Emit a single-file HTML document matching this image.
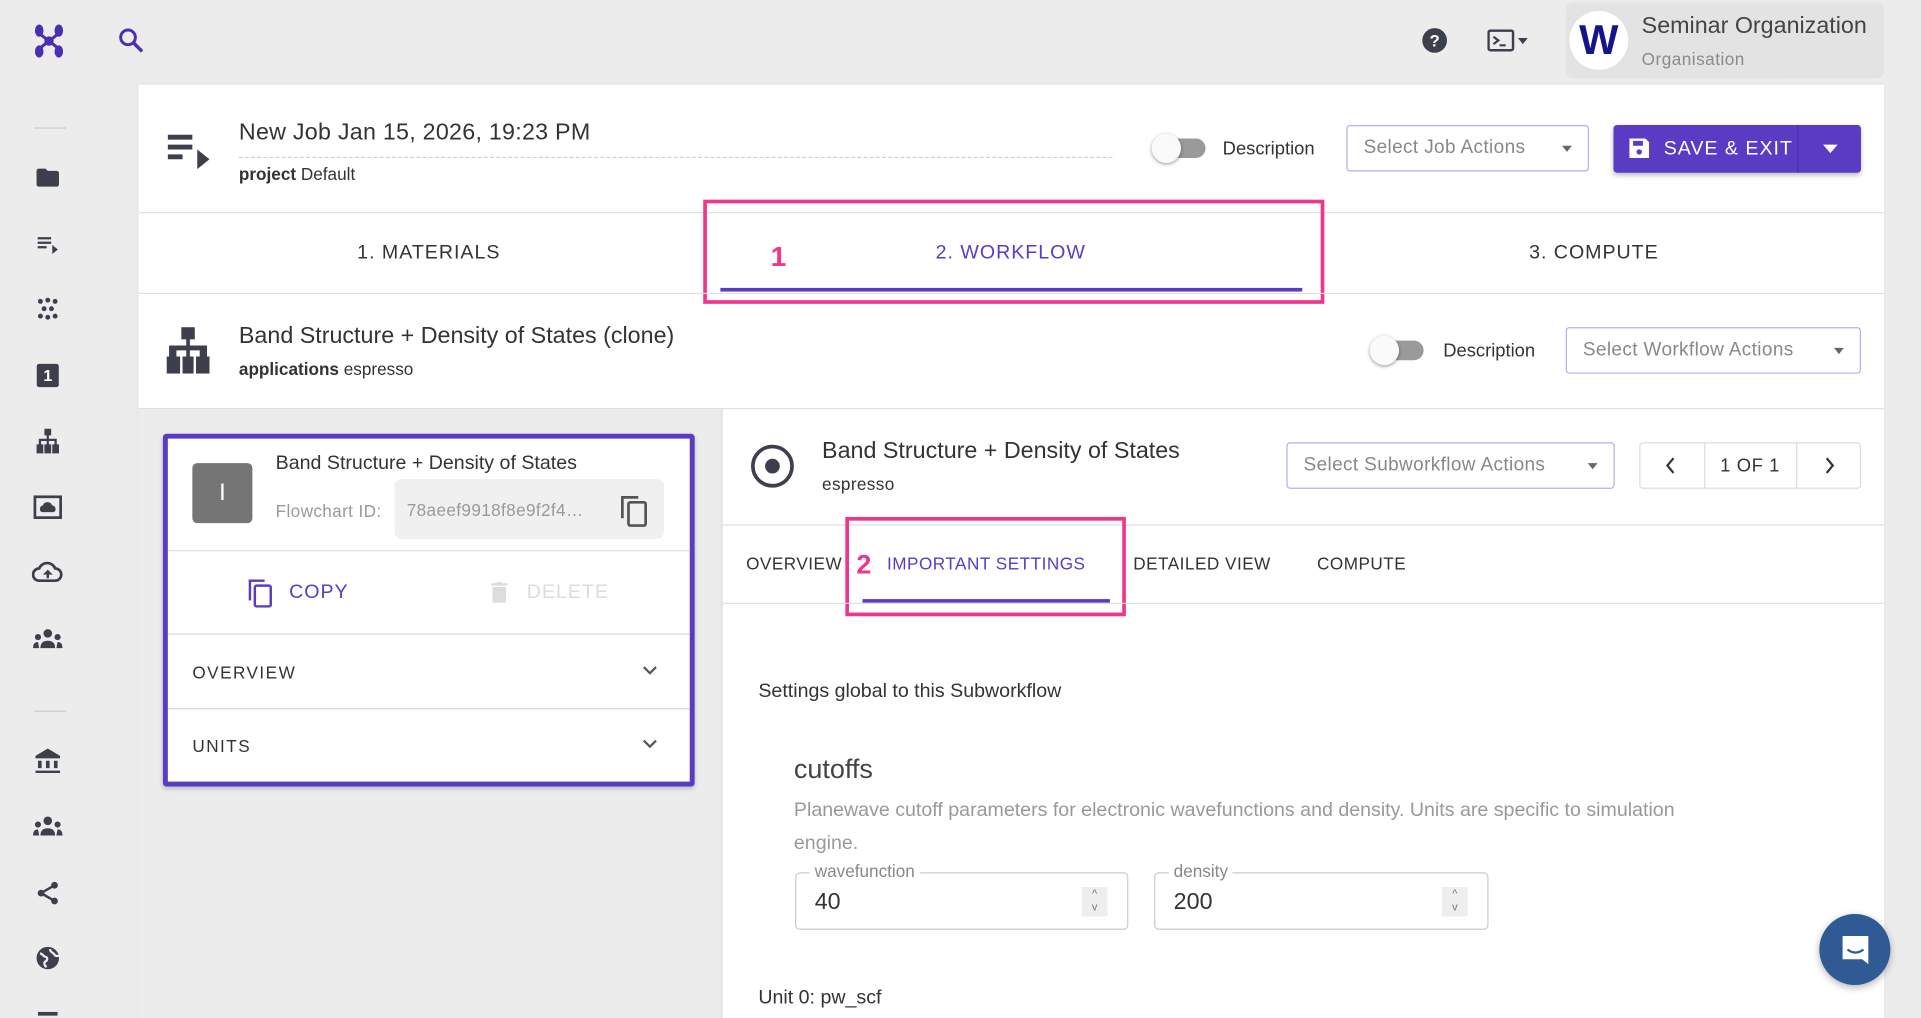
<!DOCTYPE html>
<html><head><meta charset="utf-8"><style>
*{box-sizing:border-box;margin:0;padding:0}
html,body{width:1921px;height:1018px;overflow:hidden;background:#ececec}
#s{position:absolute;left:0;top:0;width:1568px;height:831px;overflow:hidden;transform:scale(1.22513);transform-origin:0 0;font-family:"Liberation Sans",sans-serif;color:#333}
.a{position:absolute}
.t{position:absolute;white-space:nowrap;line-height:1}
.ln{position:absolute;background:#e0e0e0;height:1px}
.sel{position:absolute;border:1px solid #b9aee6;border-radius:3px;background:#fff;color:#888;font-size:15.5px;letter-spacing:.3px}
.sel span{position:absolute;top:50%;transform:translateY(-50%);left:13px}
.sel i{position:absolute;right:13px;top:50%;margin-top:-2px;border-left:4px solid transparent;border-right:4px solid transparent;border-top:5px solid #666}
.tog{position:absolute;width:44px;height:24px}
.tog b{position:absolute;left:10px;top:4px;width:34px;height:16px;border-radius:8px;background:#9a9a9a}
.tog u{position:absolute;left:0;top:0;width:24px;height:24px;border-radius:50%;background:#fafafa;box-shadow:0 1px 3px rgba(0,0,0,.4)}
.ic{position:absolute;fill:#3d3f4d}
</style></head><body><div id="s">
<!-- sidebar -->
<svg class="a" style="left:27px;top:19px" width="26" height="29" viewBox="0 0 26 29"><g fill="#4b2fb3"><ellipse cx="5" cy="6" rx="3.5" ry="5"/><ellipse cx="21" cy="6" rx="3.5" ry="5"/><ellipse cx="5" cy="23" rx="3.5" ry="5"/><ellipse cx="21" cy="23" rx="3.5" ry="5"/><circle cx="13" cy="14.5" r="3.8"/><path d="M6 9l5 4M20 9l-5 4M6 20l5-4M20 20l-5-4" stroke="#4b2fb3" stroke-width="2.5"/></g></svg>
<svg class="a" style="left:95px;top:21px" width="24" height="24" viewBox="0 0 24 24"><circle cx="9.5" cy="9.5" r="6" fill="none" stroke="#4b2fb3" stroke-width="2.4"/><path d="M14 14l7 7" stroke="#4b2fb3" stroke-width="2.8"/></svg>
<div class="a" style="left:28px;top:104px;width:26px;height:1px;background:#ccc"></div>
<svg class="ic" style="left:28px;top:134px" width="22" height="22" viewBox="0 0 24 24"><path d="M10 4H4c-1.1 0-2 .9-2 2v12c0 1.1.9 2 2 2h16c1.1 0 2-.9 2-2V8c0-1.1-.9-2-2-2h-8l-2-2z"/></svg>
<svg class="ic" style="left:28px;top:189px" width="22" height="22" viewBox="0 0 24 24"><path d="M3 5h12v2H3zM3 9h12v2H3zM3 13h8v2H3zM16 12l5 4-5 4z"/></svg>
<svg class="ic" style="left:29px;top:242px" width="20" height="20" viewBox="0 0 20 20"><g><circle cx="4" cy="4" r="2"/><circle cx="10" cy="3" r="2"/><circle cx="16" cy="4" r="2"/><circle cx="7" cy="10" r="2"/><circle cx="13" cy="10" r="2"/><circle cx="4" cy="16" r="2"/><circle cx="10" cy="17" r="2"/><circle cx="16" cy="16" r="2"/></g></svg>
<div class="a" style="left:30px;top:297px;width:18px;height:19px;background:#3d3f4d;border-radius:2px;color:#fff;font-size:13px;font-weight:bold;text-align:center;line-height:19px">1</div>
<svg class="ic" style="left:28px;top:349px" width="22" height="22" viewBox="0 0 24 24"><path d="M9 1h6v6h-2v3h7v5h2v8h-6v-8h2v-3h-5v3h2v8H9v-8h2v-3H6v3h2v8H2v-8h2v-5h7V7H9z"/></svg>
<svg class="a" style="left:27px;top:404px" width="24" height="20" viewBox="0 0 24 20"><rect x="1.5" y="1.5" width="21" height="17" fill="none" stroke="#3d3f4d" stroke-width="2.2"/><path d="M7 14a3 3 0 0 1 1-5.5 4 4 0 0 1 7.5 0A3 3 0 0 1 17 14z" fill="#3d3f4d"/></svg>
<svg class="a" style="left:26px;top:457px" width="26" height="20" viewBox="0 0 26 20"><path d="M6 17a5 5 0 0 1 0-10 7 7 0 0 1 13 0 5 5 0 0 1 0 10z" fill="none" stroke="#3d3f4d" stroke-width="2.2"/><path d="M13 8l-4 4h3v3h2v-3h3z" fill="#3d3f4d"/></svg>
<svg class="ic" style="left:26px;top:512px" width="26" height="18" viewBox="0 0 26 18"><circle cx="13" cy="5" r="3.5"/><circle cx="5" cy="8" r="2.5"/><circle cx="21" cy="8" r="2.5"/><path d="M7 17c0-4 2-6 6-6s6 2 6 6zM1 17c0-3 1-5 4-5l1 5zM25 17c0-3-1-5-4-5l-1 5z"/></svg>
<div class="a" style="left:28px;top:580px;width:26px;height:1px;background:#ccc"></div>
<svg class="ic" style="left:27px;top:609px" width="24" height="24" viewBox="0 0 24 24"><path d="M12 2L2 8v2h20V8zM4 12h3v6H4zM10.5 12h3v6h-3zM17 12h3v6h-3zM2 20h20v2H2z"/></svg>
<svg class="ic" style="left:26px;top:665px" width="26" height="18" viewBox="0 0 26 18"><circle cx="13" cy="5" r="3.5"/><circle cx="5" cy="8" r="2.5"/><circle cx="21" cy="8" r="2.5"/><path d="M7 17c0-4 2-6 6-6s6 2 6 6zM1 17c0-3 1-5 4-5l1 5zM25 17c0-3-1-5-4-5l-1 5z"/></svg>
<svg class="a" style="left:28px;top:718px" width="22" height="22" viewBox="0 0 24 24"><path d="M18 5L6 12l12 7" fill="none" stroke="#3d3f4d" stroke-width="2.2"/><circle cx="18" cy="5" r="3" fill="#3d3f4d"/><circle cx="6" cy="12" r="3" fill="#3d3f4d"/><circle cx="18" cy="19" r="3" fill="#3d3f4d"/></svg>
<svg class="a" style="left:28px;top:771px" width="22" height="22" viewBox="0 0 24 24"><circle cx="12" cy="12" r="10" fill="#3d3f4d"/><path d="M5 8c3 0 3 3 5 3s2 3 0 4-1 4 1 5M14 4c0 3 3 3 4 5s3 1 4 1" fill="none" stroke="#ececec" stroke-width="2"/></svg>
<div class="a" style="left:31px;top:826px;width:16px;height:3px;background:#3d3f4d"></div>
<!-- top right -->
<svg class="a" style="left:1160px;top:22px" width="22" height="22" viewBox="0 0 24 24"><circle cx="12" cy="12" r="11" fill="#3d3f4d"/><text x="12" y="17.5" font-size="15" font-weight="bold" fill="#fff" text-anchor="middle" font-family="Liberation Sans">?</text></svg>
<svg class="a" style="left:1214px;top:24px" width="38" height="18" viewBox="0 0 38 18"><rect x="1" y="1" width="20" height="16" rx="1.5" fill="none" stroke="#3d3f4d" stroke-width="2"/><path d="M5 6l4 3-4 3M10 13h5" fill="none" stroke="#3d3f4d" stroke-width="1.8"/><path d="M25 7h8l-4 5z" fill="#3d3f4d"/></svg>
<div class="a" style="left:1278px;top:2px;width:260px;height:62px;background:#e3e3e3;border-radius:6px"></div>
<div class="a" style="left:1281px;top:9px;width:48px;height:48px;border-radius:50%;background:#fff;color:#15158a;font-weight:bold;font-size:34px;text-align:center;line-height:48px;font-family:'Liberation Sans',sans-serif">W</div>
<div class="t" style="left:1340px;top:12px;font-size:19px;color:#444">Seminar Organization</div>
<div class="t" style="left:1340px;top:41px;font-size:14px;color:#8a8a8a;letter-spacing:.4px">Organisation</div>
<!-- card -->
<div class="a" style="left:113px;top:69px;width:1425px;height:762px;background:#fff;box-shadow:0 0 2px rgba(0,0,0,.15)"></div>
<svg class="ic" style="left:136px;top:108px" width="38" height="30" viewBox="0 0 38 30"><path d="M1 2h20v4H1zM1 10h20v4H1zM1 18h12v4H1zM25 14l10 8-10 8z"/></svg>
<div class="t" style="left:195px;top:99px;font-size:19px;color:#333;letter-spacing:.2px">New Job Jan 15, 2026, 19:23 PM</div>
<div class="a" style="left:195px;top:128px;width:713px;border-top:1px dashed #ccc"></div>
<div class="t" style="left:195px;top:135px;font-size:14px;color:#333"><b>project</b> Default</div>
<div class="tog" style="left:940px;top:109px"><b></b><u></u></div>
<div class="t" style="left:998px;top:114px;font-size:15px;color:#333">Description</div>
<div class="sel" style="left:1099px;top:102px;width:198px;height:38px"><span>Select Job Actions</span><i></i></div>
<div class="a" style="left:1317px;top:102px;width:202px;height:39px;background:#5a3bc4;border-radius:3px;box-shadow:0 2px 4px rgba(0,0,0,.25)"></div>
<div class="a" style="left:1467px;top:102px;width:1px;height:39px;background:#4a2fa8"></div>
<svg class="a" style="left:1329px;top:112px" width="18" height="18" viewBox="0 0 18 18"><path d="M1 1h13l3 3v13H1z" fill="#fff"/><rect x="4" y="3" width="8" height="4" fill="#5a3bc4"/><circle cx="9" cy="12" r="2.2" fill="#5a3bc4"/></svg>
<div class="t" style="left:1358px;top:114px;font-size:16px;color:#fff;letter-spacing:.8px;font-weight:500">SAVE &amp; EXIT</div>
<div class="a" style="left:1488px;top:118px;border-left:6px solid transparent;border-right:6px solid transparent;border-top:7px solid #fff"></div>
<div class="ln" style="left:113px;top:173px;width:1425px"></div>
<!-- main tabs -->
<div class="t" style="left:250px;top:199px;width:200px;text-align:center;font-size:16px;letter-spacing:.8px;color:#333">1. MATERIALS</div>
<div class="t" style="left:725px;top:199px;width:200px;text-align:center;font-size:16px;letter-spacing:.8px;color:#5a3bc4">2. WORKFLOW</div>
<div class="t" style="left:1201px;top:199px;width:200px;text-align:center;font-size:16px;letter-spacing:.8px;color:#333">3. COMPUTE</div>
<div class="a" style="left:588px;top:235px;width:475px;height:3px;background:#5a3bc4"></div>
<div class="a" style="left:574px;top:163px;width:507px;height:85px;border:3px solid #f0358a"></div>
<div class="t" style="left:629px;top:198px;font-size:23px;font-weight:bold;color:#f0358a">1</div>
<div class="ln" style="left:113px;top:239px;width:1425px"></div>
<!-- workflow header -->
<svg class="ic" style="left:136px;top:267px" width="35" height="38" viewBox="0 0 35 38"><path d="M12 0h11v10h-4v5h14v9h2v14H24V24h3v-5H19v5h3v14H13V24h3v-5H8v5h3v14H0V24h2v-9h14v-5h-4z"/></svg>
<div class="t" style="left:195px;top:265px;font-size:19px;color:#333">Band Structure + Density of States (clone)</div>
<div class="t" style="left:195px;top:294px;font-size:14px;color:#333"><b>applications</b> espresso</div>
<div class="tog" style="left:1118px;top:274px"><b></b><u></u></div>
<div class="t" style="left:1178px;top:279px;font-size:15px;color:#333">Description</div>
<div class="sel" style="left:1278px;top:267px;width:241px;height:38px"><span>Select Workflow Actions</span><i></i></div>
<div class="ln" style="left:113px;top:333px;width:1425px"></div>
<!-- left panel -->
<div class="a" style="left:113px;top:334px;width:476px;height:497px;background:#ececec"></div>
<div class="a" style="left:588px;top:334px;width:2px;height:497px;background:#e4e4e4"></div>
<div class="a" style="left:133px;top:354px;width:434px;height:288px;background:#fff;border:4px solid #5a3bc4;border-radius:3px;box-shadow:0 2px 4px rgba(0,0,0,.2)"></div>
<div class="a" style="left:157px;top:378px;width:49px;height:49px;background:#757575;border-radius:4px;color:#fff;font-size:20px;text-align:center;line-height:49px">I</div>
<div class="t" style="left:225px;top:371px;font-size:16px;color:#333">Band Structure + Density of States</div>
<div class="t" style="left:225px;top:410px;font-size:14px;color:#999;letter-spacing:.3px">Flowchart ID:</div>
<div class="a" style="left:322px;top:391px;width:220px;height:49px;background:#f0f0f0;border-radius:6px"></div>
<div class="t" style="left:332px;top:409px;font-size:14px;color:#999;letter-spacing:.3px">78aeef9918f8e9f2f4…</div>
<svg class="a" style="left:505px;top:403px" width="26" height="28" viewBox="0 0 26 28"><path d="M3 20V3h13" fill="none" stroke="#555" stroke-width="2.2"/><rect x="8" y="7" width="14" height="19" rx="1.5" fill="none" stroke="#555" stroke-width="2.2"/></svg>
<div class="ln" style="left:137px;top:449px;width:426px"></div>
<svg class="a" style="left:202px;top:472px" width="22" height="24" viewBox="0 0 22 24"><path d="M2 18V2h12" fill="none" stroke="#5a3bc4" stroke-width="2"/><rect x="6" y="6" width="13" height="17" rx="1.5" fill="none" stroke="#5a3bc4" stroke-width="2"/></svg>
<div class="t" style="left:236px;top:476px;font-size:16px;color:#5a3bc4;letter-spacing:.8px">COPY</div>
<svg class="a" style="left:400px;top:474px" width="15" height="19" viewBox="0 0 15 19"><path d="M1 2h4l1-1h3l1 1h4v2H1zM2 5h11v13H2z" fill="#ddd"/></svg>
<div class="t" style="left:430px;top:476px;font-size:16px;color:#ddd;letter-spacing:.8px">DELETE</div>
<div class="ln" style="left:137px;top:517px;width:426px;background:#d8d8d8"></div>
<div class="t" style="left:157px;top:542px;font-size:14px;color:#333;letter-spacing:1.2px">OVERVIEW</div>
<svg class="a" style="left:524px;top:543px" width="13" height="9" viewBox="0 0 13 9"><path d="M1.5 1.5l5 5 5-5" fill="none" stroke="#555" stroke-width="1.8"/></svg>
<div class="ln" style="left:137px;top:578px;width:426px;background:#d8d8d8"></div>
<div class="t" style="left:157px;top:602px;font-size:14px;color:#333;letter-spacing:1.2px">UNITS</div>
<svg class="a" style="left:524px;top:603px" width="13" height="9" viewBox="0 0 13 9"><path d="M1.5 1.5l5 5 5-5" fill="none" stroke="#555" stroke-width="1.8"/></svg>
<!-- right panel -->
<svg class="a" style="left:612px;top:362px" width="37" height="37" viewBox="0 0 37 37"><circle cx="18.5" cy="18.5" r="16" fill="none" stroke="#3d3f4d" stroke-width="3"/><circle cx="18.5" cy="18.5" r="6" fill="#3d3f4d"/></svg>
<div class="t" style="left:671px;top:359px;font-size:19px;color:#333">Band Structure + Density of States</div>
<div class="t" style="left:671px;top:388px;font-size:14px;color:#333;letter-spacing:.3px">espresso</div>
<div class="sel" style="left:1050px;top:361px;width:268px;height:38px"><span>Select Subworkflow Actions</span><i></i></div>
<div class="a" style="left:1338px;top:361px;width:181px;height:38px;border:1px solid #ddd;border-radius:3px"></div>
<div class="a" style="left:1391px;top:361px;width:1px;height:38px;background:#ddd"></div>
<div class="a" style="left:1466px;top:361px;width:1px;height:38px;background:#ddd"></div>
<svg class="a" style="left:1358px;top:373px" width="12" height="14" viewBox="0 0 12 14"><path d="M8 1L3 7l5 6" fill="none" stroke="#333" stroke-width="1.8"/></svg>
<svg class="a" style="left:1487px;top:373px" width="12" height="14" viewBox="0 0 12 14"><path d="M4 1l5 6-5 6" fill="none" stroke="#333" stroke-width="1.8"/></svg>
<div class="t" style="left:1391px;top:373px;width:75px;text-align:center;font-size:15px;color:#333;letter-spacing:.5px">1 OF 1</div>
<div class="ln" style="left:590px;top:428px;width:948px"></div>
<div class="t" style="left:609px;top:453px;font-size:14px;color:#333;letter-spacing:.4px">OVERVIEW</div>
<div class="t" style="left:724px;top:453px;font-size:14px;color:#5a3bc4;letter-spacing:.4px">IMPORTANT SETTINGS</div>
<div class="t" style="left:925px;top:453px;font-size:14px;color:#333;letter-spacing:.4px">DETAILED VIEW</div>
<div class="t" style="left:1075px;top:453px;font-size:14px;color:#333;letter-spacing:.4px">COMPUTE</div>
<div class="a" style="left:704px;top:489px;width:202px;height:3px;background:#5a3bc4"></div>
<div class="a" style="left:690px;top:422px;width:229px;height:81px;border:3px solid #f0358a"></div>
<div class="t" style="left:699px;top:450px;font-size:22px;font-weight:bold;color:#f0358a">2</div>
<div class="ln" style="left:590px;top:492px;width:948px"></div>
<div class="t" style="left:619px;top:557px;font-size:16px;color:#333">Settings global to this Subworkflow</div>
<div class="t" style="left:648px;top:617px;font-size:22px;color:#444">cutoffs</div>
<div class="a" style="left:648px;top:648px;width:770px;font-size:16px;line-height:27px;color:#999">Planewave cutoff parameters for electronic wavefunctions and density. Units are specific to simulation engine.</div>
<div class="a" style="left:649px;top:712px;width:272px;height:47px;border:1px solid #ccc;border-radius:4px"></div>
<div class="t" style="left:661px;top:704px;font-size:14px;color:#888;background:#fff;padding:0 4px">wavefunction</div>
<div class="t" style="left:665px;top:727px;font-size:19px;color:#333">40</div>
<div class="a" style="left:883px;top:724px;width:21px;height:24px;background:#eee;color:#777;font-size:9px;text-align:center;line-height:11px">^<br>v</div>
<div class="a" style="left:942px;top:712px;width:273px;height:47px;border:1px solid #ccc;border-radius:4px"></div>
<div class="t" style="left:954px;top:704px;font-size:14px;color:#888;background:#fff;padding:0 4px">density</div>
<div class="t" style="left:958px;top:727px;font-size:19px;color:#333">200</div>
<div class="a" style="left:1177px;top:724px;width:21px;height:24px;background:#eee;color:#777;font-size:9px;text-align:center;line-height:11px">^<br>v</div>
<div class="t" style="left:619px;top:807px;font-size:16px;color:#333">Unit 0: pw_scf</div>
<div class="a" style="left:1485px;top:746px;width:58px;height:58px;border-radius:50%;background:#2f5a93;box-shadow:0 2px 6px rgba(0,0,0,.3)"></div>
<svg class="a" style="left:1502px;top:762px" width="25" height="27" viewBox="0 0 25 27"><path d="M2 2h21v23l-5-4H2z" fill="#fff"/><path d="M6 13q6.5 5 13 0" fill="none" stroke="#2f5a93" stroke-width="1.8"/></svg>
</div></body></html>
